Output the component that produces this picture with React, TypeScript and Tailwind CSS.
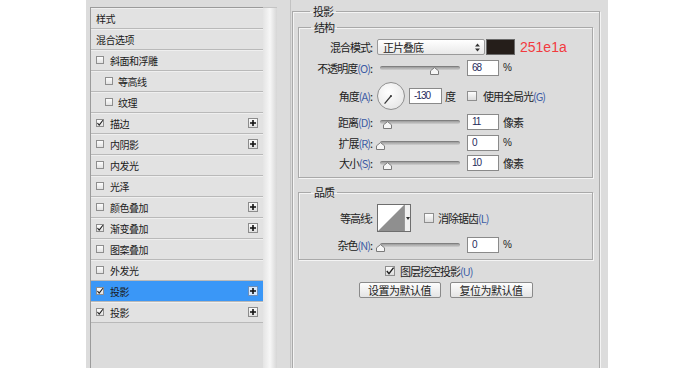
import React from "react";

type Row = { t: string; header?: boolean; cb?: boolean; indent?: boolean; plus?: boolean; sel?: boolean };

const rows: Row[] = [
  { t: "样式", header: true },
  { t: "混合选项", header: true },
  { t: "斜面和浮雕", cb: false },
  { t: "等高线", cb: false, indent: true },
  { t: "纹理", cb: false, indent: true },
  { t: "描边", cb: true, plus: true },
  { t: "内阴影", cb: false, plus: true },
  { t: "内发光", cb: false },
  { t: "光泽", cb: false },
  { t: "颜色叠加", cb: false, plus: true },
  { t: "渐变叠加", cb: true, plus: true },
  { t: "图案叠加", cb: false },
  { t: "外发光", cb: false },
  { t: "投影", cb: true, plus: true, sel: true },
  { t: "投影", cb: true, plus: true },
];

function Check({ checked, small }: { checked?: boolean; small?: boolean }) {
  return (
    <span
      className={
        small
          ? "flex h-[8px] w-[8px] shrink-0 items-center justify-center border border-[#8e8e8e] bg-gradient-to-b from-[#fdfdfd] to-[#e2e2e2]"
          : "flex h-[10px] w-[10px] shrink-0 items-center justify-center border border-[#8e8e8e] bg-gradient-to-b from-[#fdfdfd] to-[#dcdcdc]"
      }
    >
      {checked && (
        <svg width={small ? 8 : 10} height={small ? 8 : 10} viewBox="0 0 10 10" className="shrink-0">
          <path d="M1.8 5 L4 7.6 L8.6 1.6" fill="none" stroke="#1e1e1e" strokeWidth="1.4" />
        </svg>
      )}
    </span>
  );
}

function Plus({ sel }: { sel?: boolean }) {
  return (
    <span
      className={
        sel
          ? "ml-auto mr-[5px] flex h-[10px] w-[10px] items-center justify-center border border-[#6f8fb8] bg-[#d8e9fb]"
          : "ml-auto mr-[5px] flex h-[10px] w-[10px] items-center justify-center border border-[#8c8c8c] bg-gradient-to-b from-[#fafafa] to-[#e0e0e0]"
      }
    >
      <svg width="8" height="8" viewBox="0 0 8 8">
        <path d="M4 1V7M1 4H7" stroke="#111" strokeWidth="1.6" />
      </svg>
    </span>
  );
}

function Slider({ pos }: { pos: number }) {
  return (
    <div className="relative ml-[5px] flex h-[16px] w-[86px] shrink-0 items-center">
      <div className="mx-[3px] h-[4px] flex-1 rounded-full border-t border-[#7f7f7f] bg-gradient-to-b from-[#9c9c9c] to-[#cfcfcf]" />
      <svg
        className="absolute top-[7px]"
        style={{ left: 3 + pos * 80 - 4.5 }}
        width="9"
        height="8"
        viewBox="0 0 9 8"
      >
        <path d="M0.5 7.5V3.8L4.5 0.6L8.5 3.8V7.5Z" fill="#f6f6f6" stroke="#7a7a7a" />
      </svg>
    </div>
  );
}

function Num({ v, wide }: { v: string; wide?: boolean }) {
  return (
    <div
      className={
        (wide ? "w-[33px] " : "w-[32px] ") +
        "ml-[4px] flex h-[16px] shrink-0 items-center border border-[#8a8a8a] bg-white pl-[4px] font-['Liberation_Sans',sans-serif] text-[10px] text-[#1f2b5c]"
      }
    >
      {v}
    </div>
  );
}

function Label({ t, k }: { t: string; k?: string }) {
  return (
    <div className="w-[73px] shrink-0 text-right">
      {t}
      {k && <span className="text-[#3d5da6]">({k})</span>}:
    </div>
  );
}

function Fieldset({ title, className, children }: { title: string; className: string; children: React.ReactNode }) {
  return (
    <fieldset className={"min-w-0 border border-[#a9a9a9] shadow-[inset_1px_1px_0_#f4f4f4,1px_1px_0_#f4f4f4] " + className}>
      <legend className="ml-[12px] px-[3px] text-[11px] leading-[14px] tracking-[-1px] text-[#222]">{title}</legend>
      {children}
    </fieldset>
  );
}

export default function App() {
  return (
    <div className="flex h-[368px] w-[690px] overflow-hidden bg-white font-['Noto_Sans_CJK_SC','Noto_Sans',sans-serif] text-[#222]">
      <div className="w-[86px] shrink-0" />
      <div className="flex h-full w-[522px] shrink-0 bg-[#dcdcdc]">
        {/* left list */}
        <div className="flex shrink-0 pl-[4px] pt-[7px]">
          <div className="flex w-[173px] flex-col border-l border-t border-[#9b9b9b]">
            {rows.map((r, i) => (
              <div
                key={i}
                className={
                  (r.sel ? "bg-[#3a97f7] " : "bg-[#e2e2e2] shadow-[inset_0_1px_0_#efefef] ") +
                  "flex h-[21px] shrink-0 items-center border-b border-[#b9b9b9] text-[10px] tracking-[-0.5px] text-[#1a1a1a]"
                }
              >
                {r.header ? (
                  <span className="pl-[5px]">{r.t}</span>
                ) : (
                  <div className={(r.indent ? "pl-[14px] gap-[5px]" : "pl-[5px] gap-[6px]") + " flex items-center"}>
                    <Check checked={r.cb} small />
                    <span>{r.t}</span>
                  </div>
                )}
                {r.plus && <Plus sel={r.sel} />}
              </div>
            ))}
          </div>
          <div className="w-[14px] border-t border-[#c4c4c4] bg-gradient-to-r from-[#e4e4e4] via-[#f7f7f7] to-[#d6d6d6]" />
        </div>
        <div className="w-[13px] shrink-0" />
        {/* right panel */}
        <div className="flex shrink-0 border-l border-[#c2c2c2] pl-[1px]">
          <Fieldset title="投影" className="mt-[4px] h-[380px] w-[308px] pl-[5px] pr-[6px]">
            <Fieldset title="结构" className="mt-[2px] w-[295px] pb-[6px] pt-[5px]">
              <div className="flex flex-col text-[11px] leading-[14px] tracking-[-1px]">
                <div className="flex h-[16px] items-center">
                  <Label t="混合模式" />
                  <div className="ml-[5px] flex h-[16px] w-[108px] shrink-0 items-center justify-between rounded-[2px] border border-[#9a9a9a] bg-gradient-to-b from-white to-[#e9e9e9] pl-[5px] pr-[4px]">
                    <span>正片叠底</span>
                    <svg width="5" height="9" viewBox="0 0 5 9">
                      <path d="M0 3.5L2.5 0.5L5 3.5Z M0 5.5L2.5 8.5L5 5.5Z" fill="#333" />
                    </svg>
                  </div>
                  <div className="ml-[1px] h-[16px] w-[29px] shrink-0 border border-[#6a6a6a] bg-[#251e1a]" />
                  <span className="ml-[5px] font-['Liberation_Sans',sans-serif] text-[14px] tracking-normal text-[#f23a3f]">251e1a</span>
                </div>
                <div className="mt-[5px] flex h-[16px] items-center">
                  <Label t="不透明度" k="O" />
                  <Slider pos={0.68} />
                  <Num v="68" />
                  <span className="ml-[4px] font-['Liberation_Sans',sans-serif] text-[10px]">%</span>
                </div>
                <div className="mt-[6px] flex h-[28px] items-center">
                  <Label t="角度" k="A" />
                  <div className="ml-[5px] h-[28px] w-[28px] shrink-0 rounded-full border border-[#8f8f8f] bg-[radial-gradient(circle_at_40%_35%,#ffffff,#e0e0e0)]">
                    <svg width="26" height="26" viewBox="0 0 26 26">
                      <line x1="13" y1="13" x2="6.6" y2="20.6" stroke="#333" strokeWidth="1.2" />
                      <circle cx="13" cy="13" r="1" fill="#333" />
                    </svg>
                  </div>
                  <Num v="-130" wide />
                  <span className="ml-[3px]">度</span>
                  <div className="ml-[12px]">
                    <Check />
                  </div>
                  <span className="ml-[6px]">
                    使用全局光<span className="text-[#3d5da6]">(G)</span>
                  </span>
                </div>
                <div className="mt-[4px] flex h-[16px] items-center">
                  <Label t="距离" k="D" />
                  <Slider pos={0.09} />
                  <Num v="11" />
                  <span className="ml-[4px]">像素</span>
                </div>
                <div className="mt-[5px] flex h-[16px] items-center">
                  <Label t="扩展" k="R" />
                  <Slider pos={0} />
                  <Num v="0" />
                  <span className="ml-[4px] font-['Liberation_Sans',sans-serif] text-[10px]">%</span>
                </div>
                <div className="mt-[4px] flex h-[16px] items-center">
                  <Label t="大小" k="S" />
                  <Slider pos={0.09} />
                  <Num v="10" />
                  <span className="ml-[4px]">像素</span>
                </div>
              </div>
            </Fieldset>
            <Fieldset title="品质" className="mt-[7px] w-[295px] pb-[6px] pt-[5px]">
              <div className="flex flex-col text-[11px] leading-[14px] tracking-[-1px]">
                <div className="flex h-[28px] items-center">
                  <Label t="等高线" />
                  <div className="ml-[5px] flex h-[28px] shrink-0 border border-[#6e6e6e] bg-white">
                    <svg width="26" height="26" viewBox="0 0 26 26">
                      <polygon points="0,26 26,0 26,26" fill="#8f8f8f" />
                    </svg>
                    <div className="flex w-[6px] items-center justify-center border-l border-[#9a9a9a] bg-[#f0f0f0]">
                      <svg width="4" height="3" viewBox="0 0 4 3">
                        <path d="M0 0H4L2 3Z" fill="#333" />
                      </svg>
                    </div>
                  </div>
                  <div className="ml-[13px]">
                    <Check />
                  </div>
                  <span className="ml-[4px]">
                    消除锯齿<span className="text-[#3d5da6]">(L)</span>
                  </span>
                </div>
                <div className="mt-[5px] flex h-[16px] items-center">
                  <Label t="杂色" k="N" />
                  <Slider pos={0} />
                  <Num v="0" />
                  <span className="ml-[4px] font-['Liberation_Sans',sans-serif] text-[10px]">%</span>
                </div>
              </div>
            </Fieldset>
            <div className="mt-[5px] flex h-[12px] items-center pl-[87px] text-[11px] tracking-[-1px]">
              <Check checked />
              <span className="ml-[5px]">
                图层挖空投影<span className="text-[#3d5da6]">(U)</span>
              </span>
            </div>
            <div className="mt-[5px] flex justify-center gap-[9px] text-[11px] tracking-[-0.5px]">
              <div className="flex h-[16px] w-[82px] items-center justify-center rounded-[2px] border border-[#8a8a8a] bg-gradient-to-b from-[#fdfdfd] to-[#e4e4e4]">
                设置为默认值
              </div>
              <div className="flex h-[16px] w-[83px] items-center justify-center rounded-[2px] border border-[#8a8a8a] bg-gradient-to-b from-[#fdfdfd] to-[#e4e4e4]">
                复位为默认值
              </div>
            </div>
          </Fieldset>
        </div>
      </div>
    </div>
  );
}
